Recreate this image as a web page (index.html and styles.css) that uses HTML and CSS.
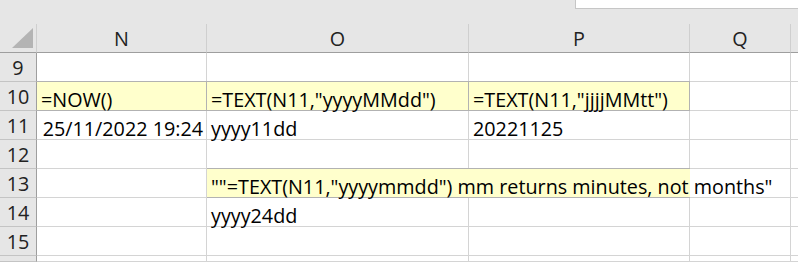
FILE: index.html
```html
<!DOCTYPE html>
<html>
<head>
<meta charset="utf-8">
<link rel="stylesheet" href="styles.css">
</head>
<body>
<div class="top"><div class="fbar"></div></div>
<div class="grid">
  <div class="corner"><svg class="tri" width="21" height="20" viewBox="0 0 21 20"><polygon points="0,20 21,20 21,0" fill="#b4b4b4"/></svg></div>
  <div class="ch">N</div>
  <div class="ch">O</div>
  <div class="ch">P</div>
  <div class="ch">Q</div>
  <div class="ch last"></div>

  <div class="rh">9</div>
  <div class="c"></div><div class="c"></div><div class="c"></div><div class="c"></div><div class="c last"></div>

  <div class="rh">10</div>
  <div class="c note">=NOW()</div>
  <div class="c note">=TEXT(N11,"yyyyMMdd")</div>
  <div class="c note">=TEXT(N11,"jjjjMMtt")</div>
  <div class="c"></div><div class="c last"></div>

  <div class="rh">11</div>
  <div class="c right">25/11/2022 19:24</div>
  <div class="c">yyyy11dd</div>
  <div class="c">20221125</div>
  <div class="c"></div><div class="c last"></div>

  <div class="rh">12</div>
  <div class="c"></div><div class="c"></div><div class="c"></div><div class="c"></div><div class="c last"></div>

  <div class="rh">13</div>
  <div class="c"></div>
  <div class="c span3"><div class="notebox">""=TEXT(N11,"yyyymmdd") mm returns minutes, not months"</div></div>
  <div class="c last"></div>

  <div class="rh">14</div>
  <div class="c"></div>
  <div class="c">yyyy24dd</div>
  <div class="c"></div><div class="c"></div><div class="c last"></div>

  <div class="rh">15</div>
  <div class="c"></div><div class="c"></div><div class="c"></div><div class="c"></div><div class="c last"></div>

  <div class="rh"></div>
  <div class="c"></div><div class="c"></div><div class="c"></div><div class="c"></div><div class="c last"></div>
</div>
</body>
</html>
```
FILE: styles.css
```css
html, body {
  margin: 0;
  padding: 0;
  background: #ffffff;
  overflow: hidden;
}
body {
  width: 798px;
  height: 262px;
  font-family: "Open Sans", "Noto Sans", sans-serif;
  font-size: 19.75px;
  color: #000;
}
.top {
  height: 24px;
  background: #e6e6e6;
  display: flex;
  justify-content: flex-end;
}
.fbar {
  width: 222px;
  height: 8px;
  background: #ffffff;
  border-left: 1px solid #c6c6c6;
  border-bottom: 1px solid #c6c6c6;
}
.grid {
  display: grid;
  grid-template-columns: 37px 170px 262px 221px 101px 7px;
  grid-template-rows: repeat(8, 29px) 6px;
}
.grid > div {
  box-sizing: border-box;
  min-width: 0;
  min-height: 0;
  line-height: 21px;
  white-space: nowrap;
}
.corner {
  background: #e6e6e6;
  border-bottom: 1px solid #9e9e9e;
  border-right: 1px solid #cfcfcf;
}
.tri {
  display: block;
  margin: 4px 0 0 12px;
}
.ch {
  background: #e6e6e6;
  border-bottom: 1px solid #9e9e9e;
  border-right: 1px solid #cfcfcf;
  display: flex;
  align-items: center;
  justify-content: center;
  color: #222;
}
.ch.last { border-right: 0; }
.rh {
  background: #e6e6e6;
  border-right: 1px solid #9e9e9e;
  border-bottom: 1px solid #c4c4c4;
  display: flex;
  align-items: center;
  justify-content: center;
  color: #222;
}
.c {
  border-right: 1px solid #d4d4d4;
  border-bottom: 1px solid #d4d4d4;
  display: flex;
  align-items: flex-end;
  padding: 0 3px 0 4px;
  overflow: visible;
}
.c.last { border-right: 0; padding: 0; }
.c.right { justify-content: flex-end; }
.c.note {
  background: #ffffcc;
  border-right-color: #b2b2b2;
  border-bottom-color: #b2b2b2;
  box-shadow: 0 -1px 0 #b2b2b2;
}
.c.span3 {
  grid-column: span 3;
  padding: 0;
}
.notebox {
  box-sizing: border-box;
  width: 483px;
  height: 100%;
  background: #ffffcc;
  box-shadow: 0 -1px 0 #b2b2b2, 0 1px 0 #b2b2b2;
  padding: 0 0 0 4px;
  display: flex;
  align-items: flex-end;
  overflow: visible;
}
```
